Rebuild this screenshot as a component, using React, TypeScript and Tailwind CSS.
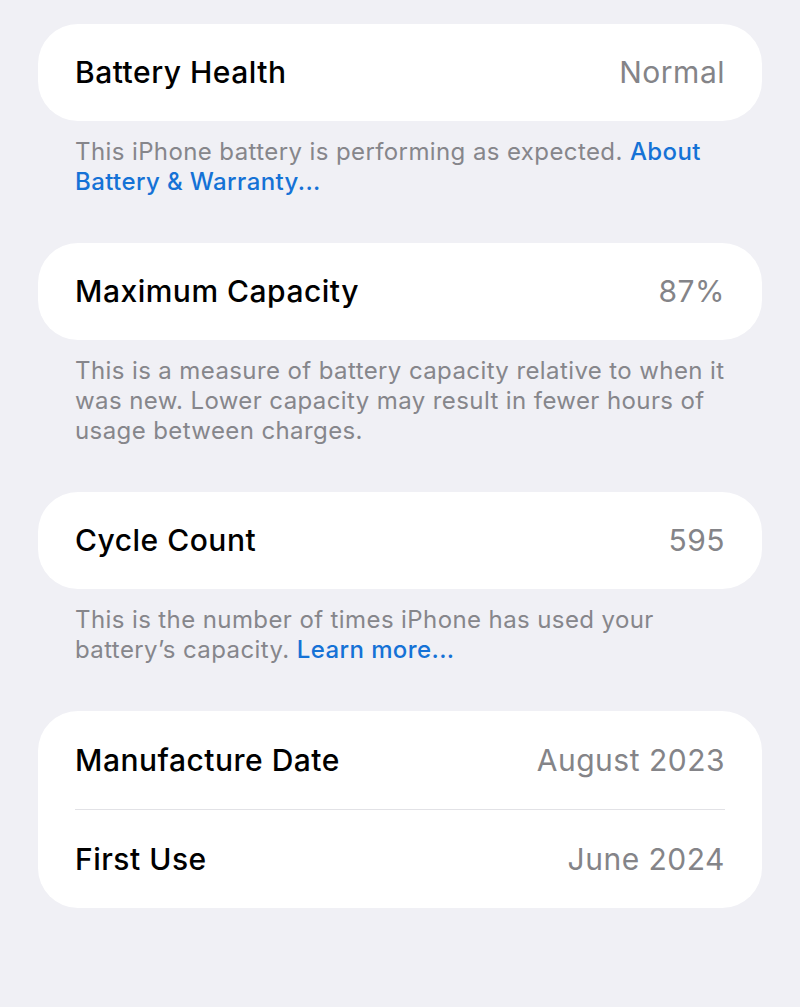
import React from "react";

const font = { fontFamily: "Inter, 'Noto Sans', sans-serif" };

function Row({ label, value, tall }: { label: string; value: string; tall?: boolean }) {
  return (
    <div
      className={
        "flex items-center justify-between px-[37px] " + (tall ? "h-[98px]" : "h-[97px]")
      }
    >
      <span className="text-[30px] font-medium tracking-[0.5px] text-black">{label}</span>
      <span className="text-[30px] font-normal tracking-[0.5px] text-[#848488]">{value}</span>
    </div>
  );
}

function Footer({ children }: { children: React.ReactNode }) {
  return (
    <p className="px-[37px] pt-[16px] pb-[46px] text-[24px] leading-[30px] tracking-[0.4px] text-[#86868b]">
      {children}
    </p>
  );
}

function Link({ children }: { children: React.ReactNode }) {
  return <span className="font-medium text-[#1572d6]">{children}</span>;
}

export default function App() {
  return (
    <div className="min-h-[1007px] w-full bg-[#f0f0f5] px-[38px] pt-[24px]" style={font}>
      <div className="rounded-[40px] bg-white">
        <Row label="Battery Health" value="Normal" />
      </div>
      <Footer>
        This iPhone battery is performing as expected. <Link>About Battery &amp; Warranty...</Link>
      </Footer>

      <div className="rounded-[40px] bg-white">
        <Row label="Maximum Capacity" value="87%" />
      </div>
      <Footer>
        This is a measure of battery capacity relative to when it was new. Lower capacity may
        result in fewer hours of usage between charges.
      </Footer>

      <div className="rounded-[40px] bg-white">
        <Row label="Cycle Count" value="595" />
      </div>
      <Footer>
        This is the number of times iPhone has used your battery’s capacity.{" "}
        <Link>Learn more...</Link>
      </Footer>

      <div className="rounded-[40px] bg-white">
        <Row label="Manufacture Date" value="August 2023" tall />
        <div className="mx-[37px] h-px bg-[#e2e2e6]" />
        <Row label="First Use" value="June 2024" tall />
      </div>
    </div>
  );
}
